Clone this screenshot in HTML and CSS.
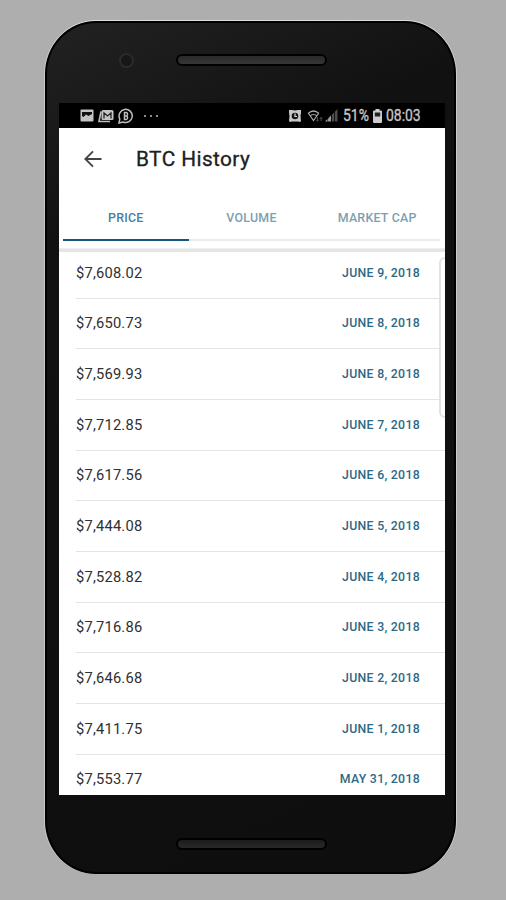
FILE: index.html
```
<!DOCTYPE html>
<html lang="en">
<head>
  <meta charset="UTF-8" />
  <meta name="viewport" content="width=device-width, initial-scale=1.0" />
  <title>BTC History</title>
  <link rel="stylesheet" href="styles.css">
</head>
<body>

  <div class="phone">
    <div class="phone-top">
      <div class="camera"></div>
      <div class="speaker"></div>
    </div>

    <div class="screen">
      <div class="status-bar">
        <div class="status-left">
          <svg width="14" height="13" viewBox="0 0 14 13">
            <rect x="0.5" y="0.5" width="13" height="12" rx="1" fill="#c4c4c4"/>
            <path d="M2 7V3h10v2L8.500 7 6 5.500 3.500 8z" fill="#111"/>
          </svg>
          <svg width="16" height="14" viewBox="0 0 16 14">
            <path d="M3 2.500L1 12.500h11" fill="none" stroke="#bdbdbd" stroke-width="1.600"/>
            <rect x="3.500" y="1" width="12" height="10" rx="1.500" fill="#c4c4c4"/>
            <path d="M6 9.500V4l3.500 3L13 4v5.500" fill="none" stroke="#222" stroke-width="1.300"/>
          </svg>
          <svg width="16" height="16" viewBox="0 0 16 16">
            <path d="M1 15l.8-4A6.600 6.600 0 1 1 5 14z" fill="none" stroke="#bdbdbd" stroke-width="1.500"/>
            <path d="M6.500 4.500v7h1.700a1.800 1.800 0 0 0 0-3.500 1.800 1.800 0 0 0 0-3.500zM6.500 8h2" fill="none" stroke="#bdbdbd" stroke-width="1.500"/>
          </svg>
          <svg class="more" width="16" height="4" viewBox="0 0 16 4">
            <circle cx="2" cy="2" r="1" fill="#bbb"/>
            <circle cx="8" cy="2" r="1" fill="#bbb"/>
            <circle cx="14" cy="2" r="1" fill="#bbb"/>
          </svg>
        </div>
        <div class="status-right">
          <svg width="14" height="14" viewBox="0 0 14 14">
            <path d="M1 1h3l3 .5L10 1h3v3l-.5 3 .5 5-1 1-2-.5H4L2 13l-1-1 .5-5L1 4z" fill="#c8c8c8"/>
            <circle cx="7" cy="7" r="3.300" fill="#151515"/>
            <path d="M7 4.500V7.500h2" fill="none" stroke="#ddd" stroke-width="1.200"/>
          </svg>
          <svg class="wifi" width="17" height="14" viewBox="0 0 17 14">
            <path d="M1 4.500q5.500-5 11 0M3 7q3.500-3 7 0M1.500 4.500l5 7 5-7" fill="none" stroke="#aaa" stroke-width="1.200"/>
            <path d="M10.500 8v4M9.300 10.800l1.200 1.500 1.200-1.500M14 12V8.500M12.800 9.800L14 8.400l1.200 1.400" fill="none" stroke="#555" stroke-width="0.900"/>
          </svg>
          <svg class="signal" width="13" height="13" viewBox="0 0 13 13">
            <path d="M0 12.500l2.500-2.500v2.500z" fill="#aaa"/>
            <path d="M3 12.500V9.500l3-3v6z" fill="#999"/>
            <path d="M6.800 12.500V5.800L9.300 3.300v9.200zM10 12.500v-10L12.500 0v12.500z" fill="#4c4c4c"/>
          </svg>
          <span class="percent">51%</span>
          <svg class="battery" width="9" height="14" viewBox="0 0 9 14">
            <path d="M2.500 0h4v1.500H8a1 1 0 0 1 1 1V13a1 1 0 0 1-1 1H1a1 1 0 0 1-1-1V2.500a1 1 0 0 1 1-1h1.500z" fill="#ccc"/>
            <rect x="1.800" y="3.500" width="5.400" height="4" fill="#222"/>
          </svg>
          <span class="clock">08:03</span>
        </div>
      </div>

      <div class="app-bar">
        <svg class="back" width="18" height="18" viewBox="0 0 18 18">
          <path d="M17.500 9H1.500M9 1.300L1.300 9 9 16.700" fill="none" stroke="#444" stroke-width="1.900"/>
        </svg>
        <h1>BTC History</h1>
      </div>

      <div class="tabs">
        <div class="tab active">PRICE</div>
        <div class="tab">VOLUME</div>
        <div class="tab">MARKET CAP</div>
      </div>

      <div class="list">
        <div class="row"><span class="price">$7,608.02</span><span class="date">JUNE 9, 2018</span></div>
        <div class="row"><span class="price">$7,650.73</span><span class="date">JUNE 8, 2018</span></div>
        <div class="row"><span class="price">$7,569.93</span><span class="date">JUNE 8, 2018</span></div>
        <div class="row"><span class="price">$7,712.85</span><span class="date">JUNE 7, 2018</span></div>
        <div class="row"><span class="price">$7,617.56</span><span class="date">JUNE 6, 2018</span></div>
        <div class="row"><span class="price">$7,444.08</span><span class="date">JUNE 5, 2018</span></div>
        <div class="row"><span class="price">$7,528.82</span><span class="date">JUNE 4, 2018</span></div>
        <div class="row"><span class="price">$7,716.86</span><span class="date">JUNE 3, 2018</span></div>
        <div class="row"><span class="price">$7,646.68</span><span class="date">JUNE 2, 2018</span></div>
        <div class="row"><span class="price">$7,411.75</span><span class="date">JUNE 1, 2018</span></div>
        <div class="row"><span class="price">$7,553.77</span><span class="date">MAY 31, 2018</span></div>
        <div class="edge-handle"></div>
      </div>
    </div>

    <div class="phone-bottom">
      <div class="speaker"></div>
    </div>
  </div>

</body>
</html>
```
FILE: styles.css
```
:root {
  --page-bg: #aeaeae;
  --primary: #17557d;
  --primary-light: #7ba0b0;
  --date-color: #2f6883;
  --text-color: #303030;
  --divider: #e4e4e4;
}

* {
  box-sizing: border-box;
  margin: 0;
  padding: 0;
}

body {
  font-family: Roboto, sans-serif;
  background-color: var(--page-bg);
  height: 900px;
  padding: 21px 0 0 45px;
  overflow: hidden;
}

/* Phone */
.phone {
  width: 411px;
  height: 853px;
  border-radius: 51px / 53px;
  background: linear-gradient(155deg, #222 0%, #111 22%, #0e0e0e 100%);
  border: 2px solid #000;
  box-shadow: 0 -1px 0 #ddd, -1px 0 0 #c8c8c8, 1px 0 0 #ccc;
  padding: 0 9px 0 12px;
}

.phone-top {
  height: 80px;
  display: flex;
  align-items: flex-start;
  padding: 30px 0 0 60px;
}

.camera {
  width: 15px;
  height: 15px;
  border-radius: 50%;
  border: 2px solid #2b2b2d;
  background: #17171a;
}

.speaker {
  width: 151px;
  height: 12px;
  border-radius: 6px;
  border: 2px solid #000;
  background: linear-gradient(#2a2a2a, #363636);
}

.phone-top .speaker {
  margin: 1px 0 0 42px;
}

.phone-bottom {
  padding: 43px 0 0 117px;
}

.phone-bottom .speaker {
  background: linear-gradient(#1c1c1c, #292929);
}

.screen {
  width: 386px;
  height: 692px;
  background: #fff;
  overflow: hidden;
}

/* Status bar */
.status-bar {
  height: 25px;
  background: #000;
  display: flex;
  justify-content: space-between;
  align-items: center;
  padding: 0 23px 0 21px;
  color: #c8c8c8;
}

.status-left,
.status-right {
  display: flex;
  align-items: center;
}

.status-left {
  gap: 4px;
}

.more {
  margin-left: 5px;
}

.wifi {
  margin-left: 5px;
}

.signal {
  margin-left: 1px;
}

.percent,
.clock {
  font-size: 16px;
  line-height: 25px;
  white-space: nowrap;
  transform-origin: left center;
  -webkit-text-stroke: 0.3px #c8c8c8;
}

.percent {
  width: 27px;
  margin-left: 5px;
  transform: scaleX(0.87);
}

.battery {
  margin: 0 4px 0 3px;
}

.clock {
  width: 36px;
  transform: scaleX(0.87);
}

/* App bar */
.app-bar {
  height: 62px;
  display: flex;
  align-items: center;
  padding-left: 25px;
}

.app-bar h1 {
  margin-left: 34px;
  font-size: 20.8px;
  font-weight: 400;
  letter-spacing: 0.42px;
  color: #202020;
  -webkit-text-stroke: 0.3px #202020;
}

.tabs {
  display: flex;
  height: 59px;
  padding: 0 5px 7px 4px;
  border-bottom: 1px solid #f0f0f0;
}

.tab {
  flex: 1;
  line-height: 56px;
  text-align: center;
  font-size: 12.4px;
  font-weight: 500;
  letter-spacing: 0.25px;
  color: var(--primary-light);
  border-bottom: 2px solid #ebebeb;
}

.tab.active {
  color: #4580a3;
  border-bottom-color: var(--primary);
}

/* Price list */
.list {
  position: relative;
  border-top: 3px solid #e5e5e5;
}

.row {
  height: 50.67px;
  margin-left: 17px;
  padding-right: 25px;
  border-bottom: 1px solid var(--divider);
  display: flex;
  justify-content: space-between;
  align-items: center;
}

.row:first-child {
  height: 46.67px;
  padding-bottom: 4px;
}

.price {
  font-size: 14.7px;
  letter-spacing: 0.2px;
  color: var(--text-color);
}

.date {
  font-size: 12.3px;
  font-weight: 500;
  letter-spacing: 0.3px;
  color: var(--date-color);
}

.edge-handle {
  position: absolute;
  top: 5px;
  right: -6px;
  width: 12px;
  height: 161px;
  border: 2px solid #e2e2e2;
  border-radius: 6px;
  background: #fff;
}
```
